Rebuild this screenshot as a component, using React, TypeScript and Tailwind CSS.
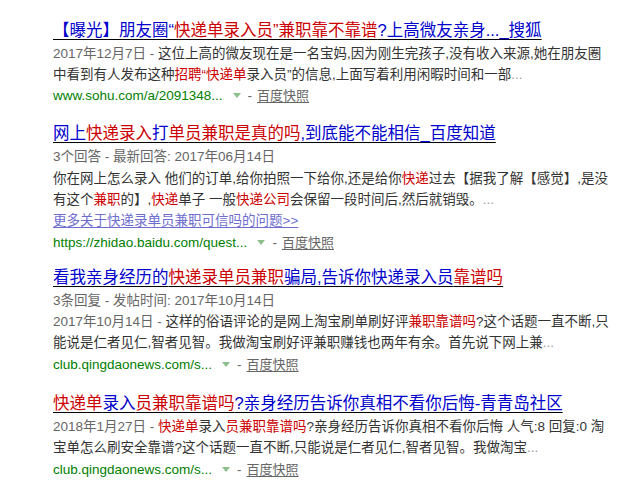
type Seg = [string, 'b' | 'r' | 't' | 'd' | 'e'];

interface Result {
  title: Seg[];
  meta?: string;
  lines: Seg[][];
  more?: string;
  url: string;
  gap: string;
}

const results: Result[] = [
  {
    title: [
      ['【曝光】朋友圈“', 'b'],
      ['快递单录入员”兼职靠不靠谱', 'r'],
      ['?上高微友亲身..._搜狐', 'b'],
    ],
    lines: [
      [
        ['2017年12月7日 - ', 'd'],
        ['这位上高的微友现在是一名宝妈,因为刚生完孩子,没有收入来源,她在朋友圈', 't'],
      ],
      [
        ['中看到有人发布这种', 't'],
        ['招聘“快递单', 'r'],
        ['录入员”的信息,上面写着利用闲暇时间和一部', 't'],
        ['...', 'e'],
      ],
    ],
    url: 'www.sohu.com/a/2091348...',
    gap: 'mb-[14px]',
  },
  {
    title: [
      ['网上', 'b'],
      ['快递录入', 'r'],
      ['打', 'b'],
      ['单员兼职是真的吗', 'r'],
      [',到底能不能相信_百度知道', 'b'],
    ],
    meta: '3个回答 - 最新回答: 2017年06月14日',
    lines: [
      [
        ['你在网上怎么录入 他们的订单,给你拍照一下给你,还是给你', 't'],
        ['快递', 'r'],
        ['过去【据我了解【感觉】,是没', 't'],
      ],
      [
        ['有这个', 't'],
        ['兼职', 'r'],
        ['的】,', 't'],
        ['快递', 'r'],
        ['单子 一般', 't'],
        ['快递公司', 'r'],
        ['会保留一段时间后,然后就销毁。', 't'],
        ['...', 'e'],
      ],
    ],
    more: '更多关于快递录单员兼职可信吗的问题>>',
    url: 'https://zhidao.baidu.com/quest...',
    gap: 'mb-[11px]',
  },
  {
    title: [
      ['看我亲身经历的', 'b'],
      ['快递录单员兼职', 'r'],
      ['骗局,告诉你快递录入员', 'b'],
      ['靠谱吗', 'r'],
    ],
    meta: '3条回复 - 发帖时间: 2017年10月14日',
    lines: [
      [
        ['2017年10月14日 - ', 'd'],
        ['这样的俗语评论的是网上淘宝刷单刷好评', 't'],
        ['兼职靠谱吗', 'r'],
        ['?这个话题一直不断,只', 't'],
      ],
      [
        ['能说是仁者见仁,智者见智。我做淘宝刷好评兼职赚钱也两年有余。首先说下网上兼', 't'],
        ['...', 'e'],
      ],
    ],
    url: 'club.qingdaonews.com/s...',
    gap: 'mb-[15px]',
  },
  {
    title: [
      ['快递单', 'r'],
      ['录入', 'b'],
      ['员兼职靠谱吗', 'r'],
      ['?亲身经历告诉你真相不看你后悔-青青岛社区', 'b'],
    ],
    lines: [
      [
        ['2018年1月27日 - ', 'd'],
        ['快递单', 'r'],
        ['录入', 't'],
        ['员兼职靠谱吗', 'r'],
        ['?亲身经历告诉你真相不看你后悔 人气:8 回复:0 淘', 't'],
      ],
      [
        ['宝单怎么刷安全靠谱?这个话题一直不断,只能说是仁者见仁,智者见智。我做淘宝', 't'],
        ['...', 'e'],
      ],
    ],
    url: 'club.qingdaonews.com/s...',
    gap: 'mb-0',
  },
];

const segColor = {
  b: 'text-[#0000cc]',
  r: 'text-[#cc0000]',
  t: 'text-[#333333]',
  d: 'text-[#666666]',
  e: 'text-[#999999]',
};

function Segs({ segs }: { segs: Seg[] }) {
  return (
    <>
      {segs.map(([text, kind], i) => (
        <span key={i} className={segColor[kind]}>
          {text}
        </span>
      ))}
    </>
  );
}

function ResultItem({ r }: { r: Result }) {
  return (
    <div className={r.gap}>
      <a href="#" className="block whitespace-nowrap text-[16.5px] leading-[26px] underline underline-offset-[3px]">
        <Segs segs={r.title} />
      </a>
      <div className="text-[13.5px] leading-[21.3px]">
        {r.meta && <div className="whitespace-nowrap text-[#666666]">{r.meta}</div>}
        {r.lines.map((line, i) => (
          <div key={i} className="whitespace-nowrap">
            <Segs segs={line} />
          </div>
        ))}
        {r.more && (
          <div className="whitespace-nowrap">
            <a href="#" className="text-[#6e6ed0] underline underline-offset-2">
              {r.more}
            </a>
          </div>
        )}
        <div className="flex items-center whitespace-nowrap">
          <span className="text-[#008000]">{r.url}</span>
          <span className="ml-[10px] inline-block h-0 w-0 border-x-[4px] border-t-[5px] border-x-transparent border-t-[#8cbf8c]" />
          <span className="ml-[7px] text-[#666666]">-</span>
          <a href="#" className="ml-[5px] text-[13px] text-[#666666] underline underline-offset-2">
            百度快照
          </a>
        </div>
      </div>
    </div>
  );
}

export default function App() {
  return (
    <div className="h-[486px] w-[640px] overflow-hidden bg-white pl-[53px] pt-[16.5px] font-['Liberation_Sans','Noto_Sans_CJK_SC',sans-serif]">
      {results.map((r, i) => (
        <ResultItem key={i} r={r} />
      ))}
    </div>
  );
}
